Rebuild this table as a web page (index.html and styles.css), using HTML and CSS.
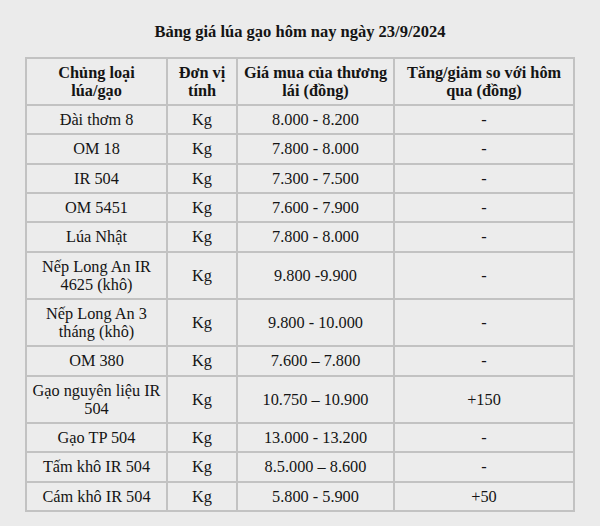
FILE: index.html
```html
<!DOCTYPE html>
<html lang="vi">
<head>
<meta charset="utf-8">
<link rel="stylesheet" href="styles.css">
</head>
<body>
<div class="page">
  <h1 class="title">Bảng giá lúa gạo hôm nay ngày 23/9/2024</h1>
  <table class="price-table">
    <colgroup>
      <col class="c1"><col class="c2"><col class="c3"><col class="c4">
    </colgroup>
    <thead>
      <tr>
        <th>Chủng loại<br>lúa/gạo</th>
        <th>Đơn vị<br>tính</th>
        <th>Giá mua của thương<br>lái (đồng)</th>
        <th>Tăng/giảm so với hôm<br>qua (đồng)</th>
      </tr>
    </thead>
    <tbody>
      <tr><td>Đài thơm 8</td><td>Kg</td><td>8.000 - 8.200</td><td>-</td></tr>
      <tr><td>OM 18</td><td>Kg</td><td>7.800 - 8.000</td><td>-</td></tr>
      <tr><td>IR 504</td><td>Kg</td><td>7.300 - 7.500</td><td>-</td></tr>
      <tr><td>OM 5451</td><td>Kg</td><td>7.600 - 7.900</td><td>-</td></tr>
      <tr><td>Lúa Nhật</td><td>Kg</td><td>7.800 - 8.000</td><td>-</td></tr>
      <tr><td>Nếp Long An IR<br>4625 (khô)</td><td>Kg</td><td>9.800 -9.900</td><td>-</td></tr>
      <tr><td>Nếp Long An 3<br>tháng (khô)</td><td>Kg</td><td>9.800 - 10.000</td><td>-</td></tr>
      <tr><td>OM 380</td><td>Kg</td><td>7.600 – 7.800</td><td>-</td></tr>
      <tr><td>Gạo nguyên liệu IR<br>504</td><td>Kg</td><td>10.750 – 10.900</td><td>+150</td></tr>
      <tr><td>Gạo TP 504</td><td>Kg</td><td>13.000 - 13.200</td><td>-</td></tr>
      <tr><td>Tấm khô IR 504</td><td>Kg</td><td>8.5.000 – 8.600</td><td>-</td></tr>
      <tr><td>Cám khô IR 504</td><td>Kg</td><td>5.800 - 5.900</td><td>+50</td></tr>
    </tbody>
  </table>
</div>
</body>
</html>
```
FILE: styles.css
```css
html, body {
  margin: 0;
  padding: 0;
  background: #ebebeb;
}
.page {
  width: 600px;
  height: 526px;
  overflow: hidden;
  font-family: "Liberation Serif", "Times New Roman", serif;
  color: #141414;
}
.title {
  margin: 0;
  padding-top: 22px;
  height: 35px;
  font-size: 16.5px;
  line-height: 20px;
  font-weight: bold;
  text-align: center;
}
.price-table {
  margin-left: 25px;
  border-collapse: collapse;
  table-layout: fixed;
  width: 548px;
  font-size: 16.3px;
  line-height: 18px;
  background: #ececec;
}
.c1 { width: 141px; }
.c2 { width: 70px; }
.c3 { width: 157px; }
.c4 { width: 180px; }
.price-table th,
.price-table td {
  border: 2px solid #c2c2c2;
  padding: 5px 3px 4.35px;
  text-align: center;
  vertical-align: middle;
  font-weight: normal;
}
.price-table th {
  font-weight: bold;
  padding: 5px 3px 4px;
}
```
